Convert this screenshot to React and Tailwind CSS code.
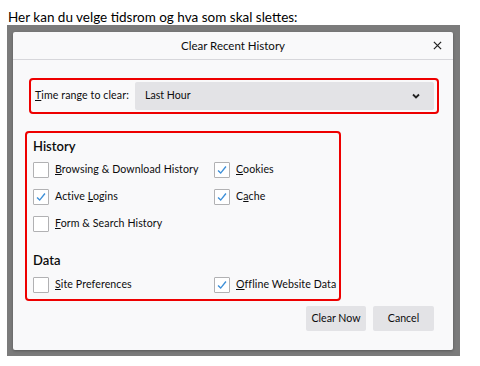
import React from 'react';

const Check = () => (
  <svg viewBox="0 0 16 16" className="w-[16px] h-[16px]">
    <path d="M3.5 8.5 L6.5 11.5 L12.5 4" fill="none" stroke="#3d8fd8" strokeWidth="1.6" />
  </svg>
);

const Option = ({ checked, pre, u, post, width }) => (
  <div className={`flex items-center h-[16px] ${width}`}>
    <div className="w-[16px] h-[16px] shrink-0 bg-white border border-[#b1b1b3] rounded-[1px] flex items-center justify-center">
      {checked && <Check />}
    </div>
    <span className="ml-[6px] text-[10.6px] tracking-[0.1px] text-[#0c0c0d] whitespace-nowrap">
      {pre}<u>{u}</u>{post}
    </span>
  </div>
);

export default function App() {
  return (
    <div className="w-[480px] h-[366px] bg-white overflow-hidden" style={{ fontFamily: 'Lato, "Open Sans", sans-serif' }}>
      <p className="pl-[8px] pt-[8px] h-[25px] text-[13.5px] leading-[18px] text-black">
        Her kan du velge tidsrom og hva som skal slettes:
      </p>

      {/* backdrop */}
      <div className="ml-[7px] w-[453px] h-[331px] bg-[#7b7b7b] pl-[6px] pt-[7px]">
        <div className="w-[440px] h-[318px] bg-[#f9f9fa] rounded-[2px] shadow-[0_1px_3px_rgba(0,0,0,0.3)] flex flex-col">
          {/* header */}
          <div className="relative h-[28px] border-b border-[#d7d7db] flex items-center justify-center">
            <span className="text-[11.5px] text-[#0c0c0d]">Clear Recent History</span>
            <svg viewBox="0 0 10 10" className="absolute right-[11px] top-[9px] w-[9px] h-[9px]">
              <path d="M1 1 L9 9 M9 1 L1 9" stroke="#222" strokeWidth="1.4" />
            </svg>
          </div>

          {/* time range */}
          <div className="ml-[16px] mt-[18px] w-[410px] h-[36px] border-2 border-[#ee0000] rounded-[4px] flex items-center pl-[4px] pr-[3px]">
            <span className="text-[10.6px] tracking-[0.1px] text-[#0c0c0d] w-[100px] whitespace-nowrap"><u>T</u>ime range to clear:</span>
            <div className="flex-1 h-[28px] bg-[#e3e3e6] rounded-[2px] flex items-center justify-between pl-[10px] pr-[14px]">
              <span className="text-[10.6px] text-[#0c0c0d]">Last Hour</span>
              <svg viewBox="0 0 8 6" className="w-[8px] h-[6px]">
                <path d="M1 1.5 L4 4.5 L7 1.5" fill="none" stroke="#222" strokeWidth="1.8" />
              </svg>
            </div>
          </div>

          {/* history / data */}
          <div className="ml-[12px] mt-[17px] w-[316px] h-[170px] border-2 border-[#ee0000] rounded-[4px] pl-[6px] pt-[3px] flex flex-col">
            <div className="h-[22px] flex items-center text-[13px] font-semibold text-[#0c0c0d]">History</div>
            <div className="mt-[4px] flex flex-col gap-[11px]">
              <div className="flex">
                <Option pre="" u="B" post="rowsing & Download History" width="w-[181px]" />
                <Option checked pre="" u="C" post="ookies" width="" />
              </div>
              <div className="flex">
                <Option checked pre="Active " u="L" post="ogins" width="w-[181px]" />
                <Option checked pre="C" u="a" post="che" width="" />
              </div>
              <div className="flex">
                <Option pre="" u="F" post="orm & Search History" width="w-[181px]" />
              </div>
            </div>
            <div className="mt-[18px] h-[22px] flex items-center text-[13px] font-semibold text-[#0c0c0d]">Data</div>
            <div className="mt-[5px] flex">
              <Option pre="" u="S" post="ite Preferences" width="w-[181px]" />
              <Option checked pre="" u="O" post="ffline Website Data" width="" />
            </div>
          </div>

          {/* buttons */}
          <div className="mt-[5px] flex justify-end gap-[7px] pr-[19px]">
            <button className="w-[60px] h-[25px] bg-[#e3e3e6] rounded-[2px] text-[10.6px] text-[#0c0c0d]">Clear Now</button>
            <button className="w-[61px] h-[25px] bg-[#e3e3e6] rounded-[2px] text-[10.6px] text-[#0c0c0d]">Cancel</button>
          </div>
        </div>
      </div>
    </div>
  );
}
